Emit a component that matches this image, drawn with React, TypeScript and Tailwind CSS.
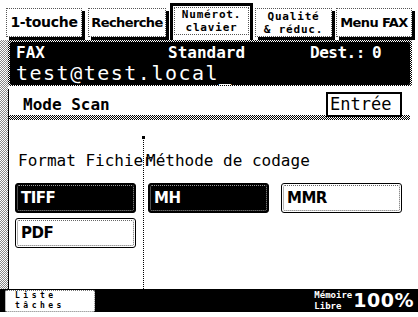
import React from "react";
import { clsx } from "clsx";
import { twMerge } from "tailwind-merge";

const cn = (...args: Parameters<typeof clsx>) => twMerge(clsx(args));

const Tab = ({
  children,
  className,
}: {
  children: React.ReactNode;
  className?: string;
}) => {
  return (
    <div
      className={cn(
        "mt-[8px] flex h-[29px] items-center justify-center border border-dotted border-[#555] bg-white shadow-[3px_3px_0_#000]",
        className,
      )}
    >
      {children}
    </div>
  );
};

const OptionButton = ({
  label,
  selected,
  className,
}: {
  label: string;
  selected?: boolean;
  className?: string;
}) => {
  return (
    <div
      className={cn(
        "h-[30px] w-[121px] rounded-[3px] border border-black p-[1px]",
        selected ? "bg-black" : "bg-white",
        className,
      )}
    >
      <div
        className={cn(
          "flex h-full items-center rounded-[2px] border border-dotted pl-[3px] font-['DejaVu_Sans',sans-serif] text-[15px] font-bold tracking-[-0.5px]",
          selected ? "border-[#999] text-white" : "border-[#666] text-black",
        )}
      >
        {label}
      </div>
    </div>
  );
};

export default function App() {
  return (
    <div className="flex h-[317px] w-[418px] flex-col overflow-hidden bg-white font-['DejaVu_Sans_Mono',monospace] text-black">
      {/* tab strip */}
      <div className="flex h-[40px] shrink-0 items-start">
        <Tab className="ml-[6px] w-[76px]">
          <span className="font-['DejaVu_Sans',sans-serif] text-[14px] font-bold tracking-[-0.3px]">
            1-touche
          </span>
        </Tab>
        <Tab className="ml-[6px] w-[78px]">
          <span className="font-['DejaVu_Sans',sans-serif] text-[13px] font-bold tracking-[-0.6px]">
            Recherche
          </span>
        </Tab>
        <div className="ml-[4px] mt-[3px] h-[37px] w-[83px] border-[3px] border-b-0 border-black bg-white px-[1px] pt-[1px]">
          <div className="flex h-[28px] flex-col items-center justify-center border border-dotted border-[#555] text-[11px] font-bold leading-[13px] tracking-[0.8px]">
            <span>Numérot.</span>
            <span>clavier</span>
          </div>
        </div>
        <Tab className="ml-[2px] w-[77px] flex-col text-[11px] font-bold leading-[13px] tracking-[0.8px]">
          <span>Qualité</span>
          <span>&amp; réduc.</span>
        </Tab>
        <Tab className="ml-[4px] w-[76px]">
          <span className="font-['DejaVu_Sans',sans-serif] text-[13px] font-bold tracking-[-0.6px]">
            Menu FAX
          </span>
        </Tab>
      </div>

      <div className="flex min-h-0 flex-1">
        {/* left rail */}
        <div className="w-[8px] shrink-0 bg-[image:repeating-conic-gradient(#888_0%_25%,#fff_0%_50%)] bg-size-[2px_2px]" />

        <div className="flex min-w-0 flex-1 flex-col">
          {/* destination panel */}
          <div className="mr-[6px] rounded-[2px] bg-[image:repeating-conic-gradient(#000_0%_25%,#fff_0%_50%)] bg-size-[2px_2px] p-[2px] pb-[1px]">
            <div className="h-[43px] rounded-[2px] bg-black pl-[6px] pt-[1px] text-white">
              <div className="grid grid-cols-[152px_142px_62px_auto] text-[16px] font-bold leading-[19px]">
                <span>FAX</span>
                <span>Standard</span>
                <span className="tracking-[-0.5px]">Dest.:</span>
                <span>0</span>
              </div>
              <div className="text-[20px] leading-[22px] tracking-[1.5px]">
                test@test.local_
              </div>
            </div>
          </div>

          {/* scan settings */}
          <div className="mr-[8px] mt-[3px] flex min-h-0 flex-1 flex-col border-l border-black">
            <div className="flex h-[26px] shrink-0 items-start justify-between">
              <span className="ml-[14px] mt-[6px] text-[16px] font-bold leading-[19px]">
                Mode Scan
              </span>
              <div className="relative z-10 mr-[8px] mt-[3px] flex h-[25px] w-[76px] items-center border-2 border-black bg-white pl-[2px] text-[17px] leading-none">
                Entrée
              </div>
            </div>
            <div className="h-[5px] shrink-0 bg-[image:repeating-conic-gradient(#000_0%_25%,#fff_0%_50%)] bg-size-[2px_2px]" />

            <div className="flex min-h-0 flex-1">
              <div className="w-[134px] shrink-0 pl-[6px] pt-[31px]">
                <div className="whitespace-nowrap pl-[3px] text-[16px] leading-[20px]">
                  Format Fichier
                </div>
                <OptionButton label="TIFF" selected className="mt-[12px]" />
                <OptionButton label="PDF" className="mt-[5px]" />
              </div>

              <div className="relative mt-[17px] flex-1 border-l border-dotted border-black pl-[4px] pt-[14px]">
                <div className="absolute -left-[2px] -top-[1px] h-[3px] w-[3px] bg-black" />
                <div className="-ml-[2px] whitespace-nowrap text-[16px] leading-[20px]">
                  Méthode de codage
                </div>
                <div className="mt-[12px] flex gap-[12px]">
                  <OptionButton label="MH" selected />
                  <OptionButton label="MMR" />
                </div>
              </div>
            </div>
          </div>
        </div>
      </div>

      {/* status bar */}
      <div className="flex h-[23px] shrink-0 items-center bg-black pl-[5px] pr-[4px]">
        <div className="flex h-[22px] w-[90px] flex-col justify-center rounded-[2px] border border-dotted border-[#777] bg-white pl-[9px] text-[8px] font-bold leading-[10px] tracking-[3.5px]">
          <span>Liste</span>
          <span>tâches</span>
        </div>
        <div className="ml-auto flex items-center text-white">
          <div className="flex flex-col text-[9px] font-bold leading-[11px]">
            <span>Mémoire</span>
            <span>Libre</span>
          </div>
          <span className="ml-[1px] font-['DejaVu_Sans',sans-serif] text-[19px] font-bold leading-none tracking-[0.5px]">
            100%
          </span>
        </div>
      </div>
      <div className="h-[5px] shrink-0" />
    </div>
  );
}
